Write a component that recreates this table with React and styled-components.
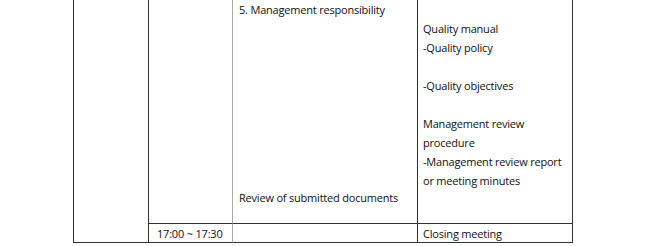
import React from "react";
import styled, { createGlobalStyle } from "styled-components";

const Global = createGlobalStyle`
  html, body { margin: 0; padding: 0; background: #fff; }
  body { font-family: "Open Sans", "Noto Sans", sans-serif; color: #111; }
`;

const Table = styled.div`
  display: grid;
  grid-template-columns: 73px 75px 84px 185px 156px;
  grid-template-rows: 224px 19px;
  font-size: 11px;
  letter-spacing: -0.2px;
  line-height: 19px;
`;

const Cell = styled.div`
  grid-column: ${(p) => p.$col};
  grid-row: ${(p) => p.$row};
  border-left: ${(p) => (p.$left ? `1px solid ${p.$left}` : "none")};
  border-right: ${(p) => (p.$right ? "1px solid #333" : "none")};
  border-bottom: ${(p) => (p.$bottom ? "1px solid #333" : "none")};
  padding: ${(p) => p.$pad || "0 6px"};
  display: flex;
  flex-direction: column;
  white-space: nowrap;
`;

const Line = styled.div`
  height: 19px;
`;

const Spacer = styled.div`
  flex: 1;
`;

export default function App() {
  return (
    <>
      <Global />
      <Table>
        <Cell $col="1" $row="1 / 3" />
        <Cell $col="2" $row="1 / 3" $left="#333" $bottom />
        <Cell $col="3" $row="1" $left="#333" $bottom />
        <Cell $col="4" $row="1" $left="#aaa" $bottom $pad="0 6px 16px 6px">
          <Line>5. Management responsibility</Line>
          <Spacer />
          <Line>Review of submitted documents</Line>
        </Cell>
        <Cell $col="5" $row="1" $left="#333" $right $bottom $pad="19px 5px 0 5px">
          <Line>Quality manual</Line>
          <Line>-Quality policy</Line>
          <Line />
          <Line>-Quality objectives</Line>
          <Line />
          <Line>Management review</Line>
          <Line>procedure</Line>
          <Line>-Management review report</Line>
          <Line>or meeting minutes</Line>
        </Cell>
        <Cell $col="3" $row="2" $left="#333" $bottom $pad="0 8px">
          <Line>17:00 ~ 17:30</Line>
        </Cell>
        <Cell $col="4" $row="2" $left="#aaa" $bottom />
        <Cell $col="5" $row="2" $left="#333" $right $bottom $pad="0 5px">
          <Line>Closing meeting</Line>
        </Cell>
      </Table>
    </>
  );
}
